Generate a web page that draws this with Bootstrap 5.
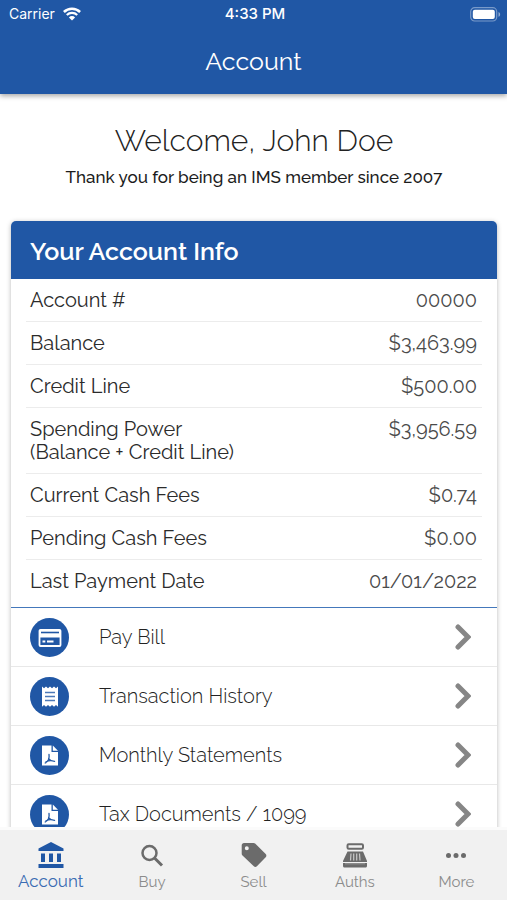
<!DOCTYPE html>
<html lang="en">
<head>
<meta charset="utf-8">
<meta name="viewport" content="width=device-width, initial-scale=1">
<title>Account</title>
<link href="https://cdn.jsdelivr.net/npm/bootstrap@5.3.0/dist/css/bootstrap.min.css" rel="stylesheet">
<style>
:root { --brand: #2057a5; --ink: #2b2b2b; }
body { font-family: Raleway, Lato, "Open Sans", sans-serif; color: var(--ink); background: #fff; }
.app-top { background: var(--brand); box-shadow: 0 2px 5px rgba(0,0,0,.35); z-index: 2; }
.status-bar { font: 400 14px/28px Inter, sans-serif; padding: 0 6px 0 9px; }
.status-time { font-size: 15px; font-weight: 500; }
.app-title { font-size: 25px; line-height: 32px; padding: 17px 0; }
.app-main { min-height: 0; scrollbar-width: none; padding: 0 10px 0 11px; }
.app-main::-webkit-scrollbar { display: none; }
.welcome { font-size: 30px; line-height: 36px; font-weight: 300; padding-top: 29px; color: #222; }
.thanks { font-size: 17px; line-height: 24px; font-weight: 500; margin: 6px 0 32px; color: #1c1c1c; }
.account-card { border-radius: 5px; box-shadow: 0 1px 5px rgba(0,0,0,.28); }
.account-head { background: var(--brand); border-radius: 5px 5px 0 0; font-size: 25px; line-height: 30px; font-weight: 600; padding: 15px 19px 13px; }
.info { padding: 0 15px 5px; border-bottom: 1px solid #4478bb; }
.info-row { font-size: 20px; line-height: 23px; padding: 10px 5px 9px 4px; border-bottom: 1px solid #ececec; }
.info-row:last-child { border-bottom: 0; }
.info-row dt { font-weight: 400; }
.info-row dd { color: #4a4a4a; font-weight: 400; }
.action { height: 59px; padding: 0 26px 0 19px; font-size: 20px; font-weight: 300; color: #222; border-bottom: 1px solid #e8e8e8; }
.action-icon { width: 39px; height: 39px; margin-right: 30px; }
.tabs { background: #f1f1f1; border-top: 3px solid #fbfbfb; z-index: 2; }
.tab { height: 70px; color: #8c8c8c; font-size: 15px; line-height: 20px; padding-top: 12px; }
.tab svg { color: #6b6b6b; }
.tab span { margin-top: 4px; }
.tab.active { color: #3a6cb3; font-size: 17px; }
.tab.active svg { color: var(--brand); }
.tab.active span { margin-top: 3px; }
</style>
</head>
<body class="vh-100 d-flex flex-column overflow-hidden">
<svg class="d-none" aria-hidden="true">
  <symbol id="chevron" viewBox="0 0 16 26"><path d="M3 3l10 10L3 23" fill="none" stroke="#868686" stroke-width="5" stroke-linecap="round" stroke-linejoin="miter"/></symbol>
  <symbol id="pdf" viewBox="0 0 39 39"><circle cx="19.500" cy="19.500" r="19.500" fill="#2057a5"/><path d="M12 9.500h9.500v6.500H28V29.500H12z" fill="#fff"/><path d="M22.800 9.500l5.200 5.200h-5.200z" fill="#fff"/><path d="M19 18.500c.4 2 .1 3.800-.6 5.300-.8 1.500-1.900 2.600-3.200 3.200M18.600 22.500c1 1.600 3 2.600 6 2.800M16 25.800c1.800-.9 4.200-1.300 6.500-1" fill="none" stroke="#2057a5" stroke-width="1.300" stroke-linecap="round"/></symbol>
</svg>

<header class="app-top text-white position-relative flex-shrink-0">
  <div class="status-bar row g-0">
    <div class="col d-flex align-items-center gap-2"><span>Carrier</span>
      <svg width="18" height="14" viewBox="0 0 18 14" fill="none" stroke="#fff" aria-hidden="true"><path d="M.9 5a11.500 11.500 0 0 1 16.200 0" stroke-width="2.500"/><path d="M3.800 8a7.400 7.400 0 0 1 10.400 0" stroke-width="2.200"/><path d="M9 13.500L5.900 10.400a4.400 4.400 0 0 1 6.200 0z" fill="#fff" stroke="none"/></svg>
    </div>
    <div class="status-time col-auto">4:33 PM</div>
    <div class="col d-flex align-items-center justify-content-end">
      <svg width="31" height="15" viewBox="0 0 31 15" aria-hidden="true"><rect x=".7" y=".7" width="26" height="13.300" rx="4" fill="none" stroke="#fff" stroke-opacity=".4" stroke-width="1.200"/><rect x="2.800" y="2.800" width="22" height="9.200" rx="2" fill="#fff"/><path d="M28.500 5c2.200.8 2.200 4 0 4.800z" fill="#fff" opacity=".5"/></svg>
    </div>
  </div>
  <h1 class="app-title text-center fw-normal m-0">Account</h1>
</header>

<main class="app-main flex-grow-1 overflow-auto">
  <h2 class="welcome text-center mb-0">Welcome, John Doe</h2>
  <p class="thanks text-center">Thank you for being an IMS member since 2007</p>
  <section class="account-card bg-white">
    <h3 class="account-head text-white m-0">Your Account Info</h3>
    <dl class="info mb-0">
      <div class="info-row d-flex justify-content-between"><dt>Account #</dt><dd class="m-0">00000</dd></div>
      <div class="info-row d-flex justify-content-between"><dt>Balance</dt><dd class="m-0">$3,463.99</dd></div>
      <div class="info-row d-flex justify-content-between"><dt>Credit Line</dt><dd class="m-0">$500.00</dd></div>
      <div class="info-row d-flex justify-content-between"><dt>Spending Power<br>(Balance + Credit Line)</dt><dd class="m-0">$3,956.59</dd></div>
      <div class="info-row d-flex justify-content-between"><dt>Current Cash Fees</dt><dd class="m-0">$0.74</dd></div>
      <div class="info-row d-flex justify-content-between"><dt>Pending Cash Fees</dt><dd class="m-0">$0.00</dd></div>
      <div class="info-row d-flex justify-content-between"><dt>Last Payment Date</dt><dd class="m-0">01/01/2022</dd></div>
    </dl>
    <nav aria-label="Account actions">
      <a href="#bill" class="action d-flex align-items-center text-decoration-none">
        <svg class="action-icon" viewBox="0 0 39 39" aria-hidden="true"><circle cx="19.500" cy="19.500" r="19.500" fill="#2057a5"/><rect x="9.500" y="11.800" width="21" height="16.200" rx="1" fill="none" stroke="#fff" stroke-width="1.800"/><path d="M9.500 12h21v7.500h-21z" fill="#fff"/><path d="M11 14.500h18" stroke="#2057a5" stroke-width="1.600"/><path d="M12.500 23.500h2.800M17 23.500h6.500" stroke="#fff" stroke-width="2"/></svg>
        <span class="flex-grow-1">Pay Bill</span><svg width="16" height="26" aria-hidden="true"><use href="#chevron"/></svg></a>
      <a href="#history" class="action d-flex align-items-center text-decoration-none">
        <svg class="action-icon" viewBox="0 0 39 39" aria-hidden="true"><circle cx="19.500" cy="19.500" r="19.500" fill="#2057a5"/><path d="M12 9.500l2 1.700 2-1.700 2 1.700 2-1.700 2 1.700 2-1.700 2 1.700 2-1.700V29.800l-2-1.700-2 1.700-2-1.700-2 1.700-2-1.700-2 1.700-2-1.700-2 1.700z" fill="#fff"/><path d="M15 15.500h10M15 19.500h10M15 23.500h10" stroke="#4c79b8" stroke-width="1.500"/></svg>
        <span class="flex-grow-1">Transaction History</span><svg width="16" height="26" aria-hidden="true"><use href="#chevron"/></svg></a>
      <a href="#statements" class="action d-flex align-items-center text-decoration-none">
        <svg class="action-icon" aria-hidden="true"><use href="#pdf"/></svg>
        <span class="flex-grow-1">Monthly Statements</span><svg width="16" height="26" aria-hidden="true"><use href="#chevron"/></svg></a>
      <a href="#tax" class="action d-flex align-items-center text-decoration-none">
        <svg class="action-icon" aria-hidden="true"><use href="#pdf"/></svg>
        <span class="flex-grow-1">Tax Documents / 1099</span><svg width="16" height="26" aria-hidden="true"><use href="#chevron"/></svg></a>
    </nav>
  </section>
</main>

<nav class="tabs position-relative flex-shrink-0" aria-label="Main">
  <div class="row g-0">
    <a href="#account" class="tab active col d-flex flex-column align-items-center text-decoration-none" aria-current="page">
      <svg width="26" height="26" viewBox="0 0 26 26" fill="currentColor" aria-hidden="true"><path d="M13 0l12.500 6.500V9H.5V6.500zM3 11.500h4v8.500H3zM11 11.500h4v8.500h-4zM19 11.500h4v8.500h-4zM.5 22h25v4H.5z"/></svg><span>Account</span></a>
    <a href="#buy" class="tab col d-flex flex-column align-items-center text-decoration-none">
      <svg width="24" height="26" viewBox="0 0 24 26" fill="none" stroke="currentColor" aria-hidden="true"><circle cx="9.500" cy="11" r="7" stroke-width="2.500"/><path d="M14.500 16l7.500 7.500" stroke-width="3"/></svg><span>Buy</span></a>
    <a href="#sell" class="tab col d-flex flex-column align-items-center text-decoration-none">
      <svg width="26" height="26" viewBox="0 0 26 26" fill="currentColor" aria-hidden="true"><path fill-rule="evenodd" d="M3 1h9.500c.7 0 1.400.3 1.900.8l10.300 10.300c.9.900.9 2.200 0 3.100l-8.800 9c-.9.900-2.200.9-3.100 0L1.500 13.500c-.5-.5-.8-1.100-.8-1.800V3.300C.7 2 1.700 1 3 1zm2.800 3.300a2 2 0 1 0 0 4 2 2 0 0 0 0-4z"/></svg><span>Sell</span></a>
    <a href="#auths" class="tab col d-flex flex-column align-items-center text-decoration-none">
      <svg width="26" height="26" viewBox="0 0 26 26" fill="currentColor" aria-hidden="true"><rect x="5.500" y="2.200" width="15.500" height="4.600" rx="1.200" fill="none" stroke="currentColor" stroke-width="2"/><path d="M5.500 9.500h15.500l4 9.500v1H1v-1zM1 21h24v3c0 .9-.6 1.500-1.500 1.500h-21c-.9 0-1.500-.6-1.500-1.500z"/><path d="M9 11.500l-.5 7M11.700 11.500v7M14.700 11.500v7M17.500 11.500l.5 7" stroke="#c9c9c9" stroke-width="1.200"/><path d="M3 21.800h20" stroke="#999" stroke-width="1"/></svg><span>Auths</span></a>
    <a href="#more" class="tab col d-flex flex-column align-items-center text-decoration-none">
      <svg width="26" height="26" viewBox="0 0 26 26" fill="currentColor" aria-hidden="true"><circle cx="5.500" cy="13.500" r="2.500"/><circle cx="13" cy="13.500" r="2.500"/><circle cx="20.500" cy="13.500" r="2.500"/></svg><span>More</span></a>
  </div>
</nav>
<script src="https://cdn.jsdelivr.net/npm/bootstrap@5.3.0/dist/js/bootstrap.bundle.min.js"></script>
</body>
</html>
